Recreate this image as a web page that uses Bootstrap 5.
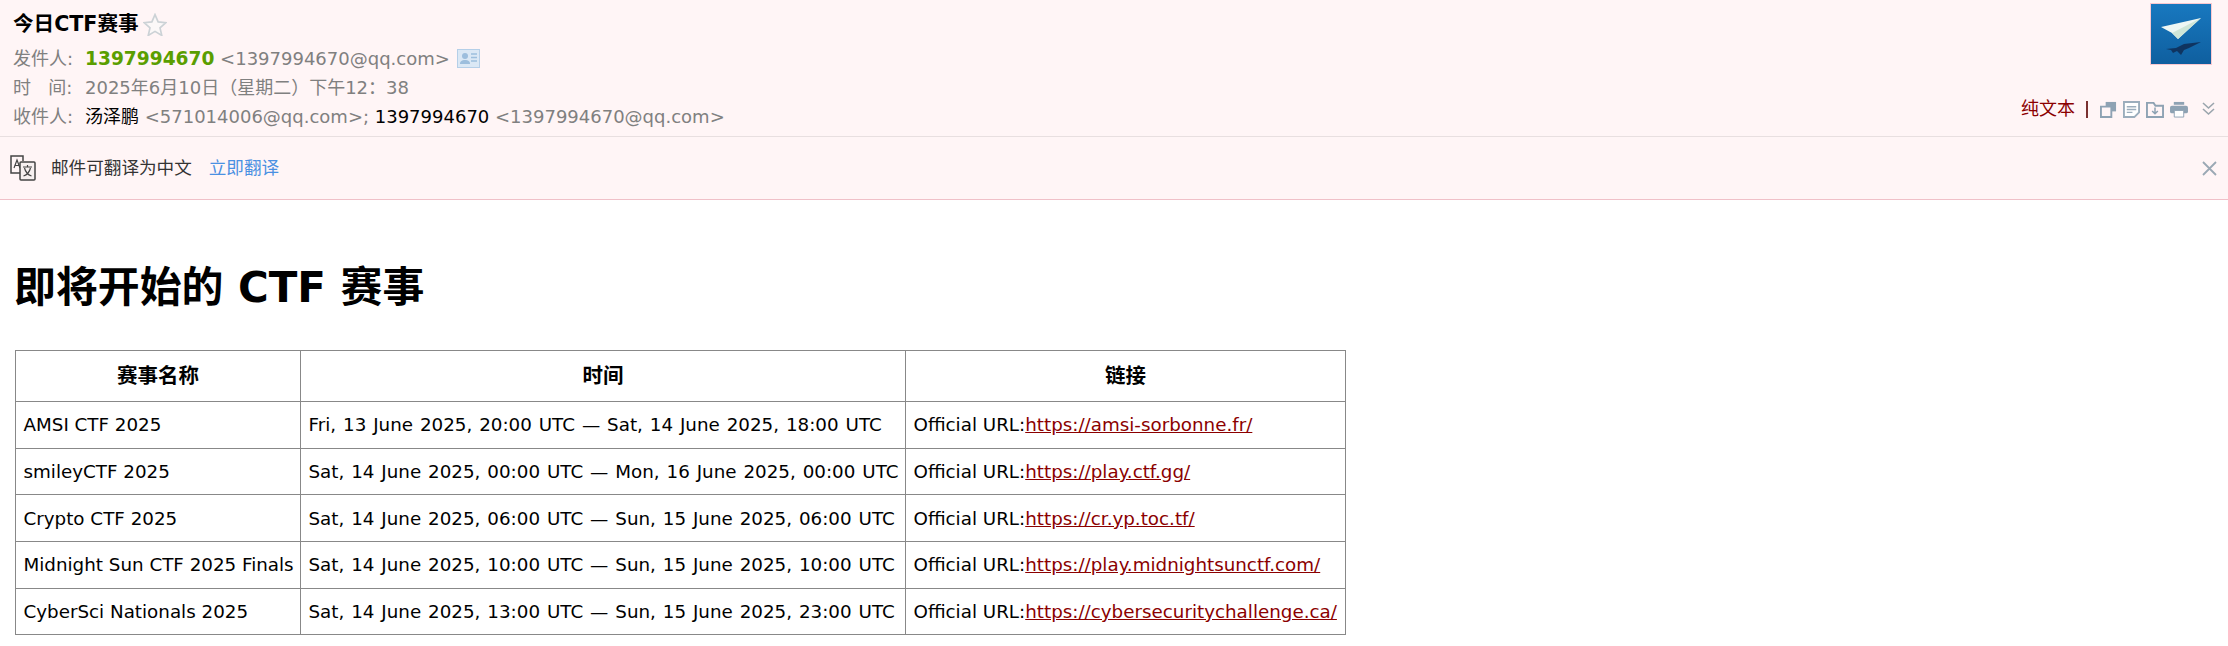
<!DOCTYPE html>
<html lang="zh">
<head>
<meta charset="utf-8">
<title>今日CTF赛事</title>
<link href="https://cdn.jsdelivr.net/npm/bootstrap@5.3.0/dist/css/bootstrap.min.css" rel="stylesheet">
<style>
body{font-family:"DejaVu Sans","Noto Sans CJK SC",sans-serif;background:#fff;color:#000;margin:0}
.mail-head{background:#fff5f6;height:137px;border-bottom:1px solid #e8dfe0;padding:10px 16px 0 13px}
.subject{font-size:20.6px;font-weight:700;line-height:28px;height:35px}
.star{margin-left:4px;vertical-align:-5px}
.meta{font-size:18px;line-height:28.8px;color:#808080;white-space:nowrap}
.meta-label{display:inline-block;width:72px}
.sender{color:#5a9e00;font-weight:700;font-size:18.6px}
.name{color:#000}
.card-ico{vertical-align:-3px;margin-left:1px}
.side{width:200px}
.avatar{width:62px;height:62px;flex:none;border:1px solid #f8c8d0;display:block;margin-top:-7px}
.tools{margin-top:33px;font-size:18px;line-height:22px;color:#8b0000;margin-right:-3px;gap:6px;white-space:nowrap;flex:none}
.sep{width:2px;height:17px;background:#7a3030;margin:0 6px 0 5px}
.trans{background:#fff5f6;height:63px;border-bottom:1px solid #f0c0c8;padding:0 11px 0 10px;font-size:17.6px;color:#333}
.trans a{color:#4a90e2;text-decoration:none;margin-left:17px}
.trans-ico{margin-right:15px}
.mail-body{padding:0 0 0 15px}
.mail-title{font-size:41.9px;font-weight:700;line-height:50px;margin:63px 0 37px;letter-spacing:0;margin-left:-1px}
.race-table{width:1331px;border-collapse:collapse;table-layout:fixed;font-size:18.3px;margin:0;white-space:nowrap}
.race-table th,.race-table td{border:1px solid #888;padding:0 7.5px;height:46.7px;vertical-align:middle;background:transparent;color:#000}
.race-table th{font-size:20.5px;font-weight:700;text-align:center;height:51px}
.race-table a{color:#8b0000}
.col-a{width:285px}
.col-b{width:605px}
.when{word-spacing:1.1px}
</style>
</head>
<body>
<header class="mail-head d-flex justify-content-between">
  <div>
    <div class="subject">今日CTF赛事<svg class="star" width="24" height="23" viewBox="0 0 23 22"><path d="M11.5 1.5l3 7 7.5.7-5.700 5 1.700 7.300-6.500-3.900-6.500 3.900 1.700-7.300L1 9.200l7.500-.7z" fill="#fbf8f8" stroke="#ccd2d6" stroke-width="1.600"/></svg></div>
    <div class="meta"><span class="meta-label">发件人:</span><span class="sender">1397994670</span> &lt;1397994670@qq.com&gt; <svg class="card-ico" width="23" height="19" viewBox="0 0 23 19"><rect x=".5" y=".5" width="22" height="18" fill="#dbe8f5" stroke="#b5cfe8"/><circle cx="8" cy="7" r="3" fill="#9dbedd"/><path d="M3 15c0-3 2-4 5-4s5 1 5 4z" fill="#9dbedd"/><path d="M14 5h6M14 8.500h6M14 12h6" stroke="#9dbedd" stroke-width="1.500"/></svg></div>
    <div class="meta"><span class="meta-label">时&nbsp;&nbsp;&nbsp;间:</span>2025年6月10日（星期二）下午12：38</div>
    <div class="meta"><span class="meta-label">收件人:</span><span class="name">汤泽鹏</span> &lt;571014006@qq.com&gt;; <span class="name">1397994670</span> &lt;1397994670@qq.com&gt;</div>
  </div>
  <div class="side d-flex flex-column align-items-end">
    <svg class="avatar" viewBox="0 0 60 60" role="img" aria-label="头像">
      <defs><linearGradient id="sky" x1="0" y1="0" x2="0" y2="1"><stop offset="0" stop-color="#1878bf"/><stop offset="1" stop-color="#0f5f9f"/></linearGradient></defs>
      <rect width="60" height="60" fill="url(#sky)"/>
      <path d="M10 23L50 14 27 35 21 29z" fill="#eef7f4"/>
      <path d="M21 29L50 14 27 35z" fill="#cfe6d8"/>
      <path d="M15 45l10-1 8-4 17-2-12 6-5 2-3 5-4-4-4 2-2-3z" fill="#0f3460"/>
    </svg>
    <div class="tools d-flex align-items-center">
      <span>纯文本</span><span class="sep"></span>
      <svg width="17" height="17" viewBox="0 0 18 18"><path d="M6 1h11v10H6z" fill="#8ea2b3"/><path d="M1 6h11v11H1z" fill="#fff5f6" stroke="#8ea2b3" stroke-width="2"/></svg>
      <svg width="17" height="17" viewBox="0 0 18 18"><path d="M1 1h16v11l-5 5H1z" fill="#fff" stroke="#9badbc" stroke-width="2"/><path d="M4 6h10M4 9h10M4 12h6" stroke="#9badbc" stroke-width="1.500"/></svg>
      <svg width="18" height="17" viewBox="0 0 19 18"><path d="M1 5V2h7l2 3h8v12H1z" fill="#fff5f6" stroke="#8ea2b3" stroke-width="2"/><path d="M9.500 7v6M6.500 10.500l3 3 3-3" fill="none" stroke="#8ea2b3" stroke-width="1.600"/></svg>
      <svg width="18" height="17" viewBox="0 0 19 18"><path d="M4 1h11v3H4z" fill="#8ea2b3"/><rect y="5" width="19" height="8" rx="2" fill="#8ea2b3"/><path d="M4.500 10h10v7h-10z" fill="#fff" stroke="#8ea2b3"/></svg>
      <svg class="ms-2" width="13" height="14" viewBox="0 0 13 14"><path d="M1 1l5.500 5L12 1M1 7l5.500 5L12 7" fill="none" stroke="#9aa5ad" stroke-width="1.600"/></svg>
    </div>
  </div>
</header>
<div class="trans d-flex align-items-center">
  <svg class="trans-ico" width="26" height="26" viewBox="0 0 26 26"><path d="M11 18H1V1h12v5" fill="none" stroke="#444" stroke-width="1.500"/><path d="M4 13l3-8 3 8M5 10.500h4" fill="none" stroke="#444" stroke-width="1.200"/><rect x="10" y="7" width="15" height="18" rx="1" fill="#f6f0f0" stroke="#444" stroke-width="1.500"/><path d="M13 12h9M17.500 10v2M14.500 13c1 4 4 7 7 8M20.500 13c-1 4-4 7-7 8" fill="none" stroke="#444" stroke-width="1.200"/></svg>
  <span>邮件可翻译为中文</span><a href="#">立即翻译</a>
  <svg class="ms-auto" width="15" height="15" viewBox="0 0 15 15"><path d="M1 1l13 13M14 1L1 14" stroke="#9aa8b4" stroke-width="1.800"/></svg>
</div>
<main class="mail-body">
  <h1 class="mail-title">即将开始的 CTF 赛事</h1>
  <table class="table race-table">
    <colgroup><col class="col-a"><col class="col-b"><col></colgroup>
    <thead><tr><th>赛事名称</th><th>时间</th><th>链接</th></tr></thead>
    <tbody>
      <tr><td>AMSI CTF 2025</td><td class="when">Fri, 13 June 2025, 20:00 UTC — Sat, 14 June 2025, 18:00 UTC</td><td>Official URL:<a href="#">https://amsi-sorbonne.fr/</a></td></tr>
      <tr><td>smileyCTF 2025</td><td class="when">Sat, 14 June 2025, 00:00 UTC — Mon, 16 June 2025, 00:00 UTC</td><td>Official URL:<a href="#">https://play.ctf.gg/</a></td></tr>
      <tr><td>Crypto CTF 2025</td><td class="when">Sat, 14 June 2025, 06:00 UTC — Sun, 15 June 2025, 06:00 UTC</td><td>Official URL:<a href="#">https://cr.yp.toc.tf/</a></td></tr>
      <tr><td>Midnight Sun CTF 2025 Finals</td><td class="when">Sat, 14 June 2025, 10:00 UTC — Sun, 15 June 2025, 10:00 UTC</td><td>Official URL:<a href="#">https://play.midnightsunctf.com/</a></td></tr>
      <tr><td>CyberSci Nationals 2025</td><td class="when">Sat, 14 June 2025, 13:00 UTC — Sun, 15 June 2025, 23:00 UTC</td><td>Official URL:<a href="#">https://cybersecuritychallenge.ca/</a></td></tr>
    </tbody>
  </table>
</main>
</body>
</html>
